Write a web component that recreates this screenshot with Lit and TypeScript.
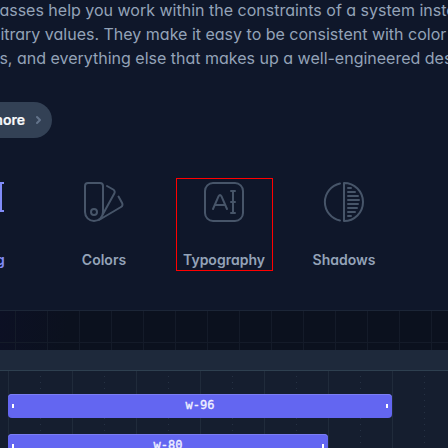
import { LitElement, html, css, svg } from "lit";
import { customElement } from "lit/decorators.js";

const lines = [
  { text: "asses help you work within the constraints of a system inste", shift: 0.4 },
  { text: "itrary values. They make it easy to be consistent with color", shift: 1.4 },
  { text: "s, and everything else that makes up a well-engineered des", shift: 0.4 },
];

const sizing = svg`<path d="M41 5v28M39 5h4M39 33h4"/>`;
const colors = svg`
  <path d="M5 8a3 3 0 0 1 3-3h12a3 3 0 0 1 3 3v26a9 9 0 0 1-18 0V8Z"/>
  <circle cx="14" cy="34" r="3"/>
  <path d="M27 8l6.2 3.5a3 3 0 0 1 1.1 4.1L23 36M38.5 18.5l3.6 6.4a3 3 0 0 1-1.1 4.1L19 42"/>`;
const typography = svg`
  <path d="M5 13a8 8 0 0 1 8-8h22a8 8 0 0 1 8 8v22a8 8 0 0 1-8 8H13a8 8 0 0 1-8-8V13Z"/>
  <path d="M13 31l5.6-12.8q1.4-2.4 2.8 0L27 31M15 27h10M33 13v21M31 13h4M31 35h4M31 24h4"/>`;
const shadows = svg`
  <path d="M20 5.4a19 19 0 0 0 0 37.2M24 5v38a19 19 0 0 0 0-38Z"/>
  <path d="M28 10h3M28 14h7M28 18h10M28 22h11M28 26h10M28 30h9M28 34h7M28 38h3"/>`;

const tabs = [
  { label: "Sizing", icon: sizing, active: true, marked: false },
  { label: "Colors", icon: colors, active: false, marked: false },
  { label: "Typography", icon: typography, active: false, marked: true },
  { label: "Shadows", icon: shadows, active: false, marked: false },
];

const bars = [
  { label: "w-96", width: 384 },
  { label: "w-80", width: 320 },
];

@customElement("app-root")
export class AppRoot extends LitElement {
  static styles = css`
    :host {
      display: flex;
      flex-direction: column;
      width: 448px;
      height: 448px;
      overflow: hidden;
      box-sizing: border-box;
      background: #0f172a;
      color: #94a3b8;
      font-family: Inter, sans-serif;
      font-feature-settings: "cv02", "cv03", "cv04", "cv11";
    }
    .copy { margin: -2px 0 0 -1px; height: 104px; flex: none; font-size: 16px; line-height: 24px; }
    .line { white-space: nowrap; }
    .more {
      display: flex;
      align-items: center;
      justify-content: flex-end;
      flex: none;
      box-sizing: border-box;
      width: 132px;
      height: 36px;
      margin-left: -80px;
      padding: 0 12px 0 0;
      gap: 12px;
      border-radius: 18px;
      background: #334155;
      color: #f8fafc;
      font-size: 14px;
      font-weight: 600;
      line-height: 20px;
      white-space: nowrap;
      -webkit-text-stroke: 0.2px #f8fafc;
    }
    .more span { padding-bottom: 1px; }
    .chevron { width: 3px; height: 6px; overflow: visible; fill: none; stroke: #64748b; stroke-width: 2; stroke-linecap: round; stroke-linejoin: round; }
    .tabs { display: grid; grid-template-columns: repeat(4, 120px); flex: none; height: 132px; margin: 40px 0 0 -76px; }
    .tab {
      display: flex;
      flex-direction: column;
      align-items: center;
      justify-self: center;
      align-self: start;
      position: relative;
      height: 93px;
      font-size: 14px;
      font-weight: 600;
      line-height: 24px;
    }
    .icon { flex: none; width: 48px; height: 48px; margin-bottom: 22px; fill: none; stroke: #475569; stroke-width: 2; stroke-linecap: round; stroke-linejoin: round; }
    .active { color: #818cf8; }
    .active .icon { stroke: #818cf8; stroke-linecap: square; }
    .marked::after { content: ""; position: absolute; top: 0; left: 50%; width: 95px; height: 91px; margin-left: -48px; border: 1px solid #f00; }
    .stage {
      flex: none;
      height: 39px;
      border-top: 1px solid #1c2637;
      background:
        repeating-linear-gradient(90deg, transparent 0 15px, #141b29 15px 16px, transparent 16px 32px),
        linear-gradient(#141b29, #141b29) 0 31px / 100% 1px no-repeat,
        linear-gradient(100deg, #0c1024, #0b111e 70px);
    }
    .toolbar { flex: none; height: 20px; border-bottom: 1px solid #2e4050; background: #1e293b; }
    .panel {
      display: flex;
      flex-direction: column;
      gap: 16px;
      flex: none;
      box-sizing: border-box;
      height: 77px;
      padding: 23px 0 0 8px;
      background:
        linear-gradient(90deg, #202b3b 1px, transparent 1px) 8px 0 / 64px 100%,
        #151e2f;
      overflow: hidden;
    }
    .dots {
      flex: none;
      height: 77px;
      margin: -23px 0 -70px 32px;
      background: radial-gradient(circle at 0.5px 0.5px, #263244 0.6px, transparent 0.7px) 0 5px / 64px 6px;
    }
    .bar {
      display: flex;
      align-items: center;
      justify-content: space-between;
      flex: none;
      box-sizing: border-box;
      height: 24px;
      padding: 0 4px;
      border-radius: 4px;
      background: #6366f1;
      box-shadow: inset 0 1px 0 #7b7ef3;
      color: #f0f1ff;
      font: 500 12px/22px "DejaVu Sans Mono", monospace;
      -webkit-text-stroke: 0.35px #f0f1ff;
    }
    .bar span { padding-bottom: 2px; }
    .tick { width: 2px; height: 4px; background: #fff; }
  `;

  render() {
    return html`
      <div class="copy">${lines.map((l) => html`<div class="line" style="text-indent:${l.shift}px">${l.text}</div>`)}</div>
      <div class="more"><span>Learn more</span><svg class="chevron" viewBox="0 0 3 6"><path d="M0 0l3 3-3 3" /></svg></div>
      <div class="tabs">
        ${tabs.map(
          (t) => html`<div class="tab ${t.active ? "active" : ""} ${t.marked ? "marked" : ""}">
            <svg class="icon" viewBox="0 0 48 48">${t.icon}</svg><span>${t.label}</span>
          </div>`
        )}
      </div>
      <div class="stage"></div>
      <div class="toolbar"></div>
      <div class="panel">
        <div class="dots"></div>
        ${bars.map(
          (b) => html`<div class="bar" style="width:${b.width}px">
            <i class="tick"></i><span>${b.label}</span><i class="tick"></i>
          </div>`
        )}
      </div>
    `;
  }
}
